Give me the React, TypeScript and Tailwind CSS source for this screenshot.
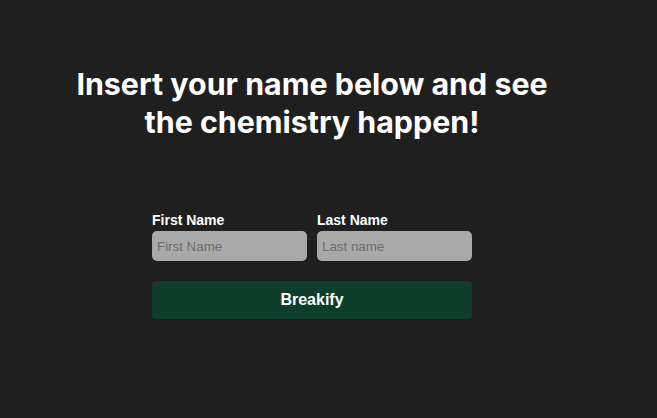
import React from "react";

export default function App() {
  return (
    <div className="min-h-[418px] w-full bg-[#1f1f1f]">
      <div className="flex w-[624px] flex-col items-center pt-[65px]">
        <h1 className="max-w-[500px] text-center font-['Inter',sans-serif] text-[30.4px] font-bold leading-[38px] text-white">
          Insert your name below and see the chemistry happen!
        </h1>
        <form
          className="mt-[71px] flex w-[320px] flex-col font-['Liberation_Sans',Arial,sans-serif]"
          onSubmit={(e) => e.preventDefault()}
        >
          <div className="flex gap-[10px]">
            <label className="flex w-[155px] flex-col">
              <span className="text-[14px] font-bold leading-[16px] text-white">First Name</span>
              <input
                placeholder="First Name"
                className="mt-[3px] h-[30px] w-[155px] rounded-[5px] bg-[#a9a9a9] px-[5px] text-[13.333px] text-[#333] outline-none placeholder:text-[#6e6e6e]"
              />
            </label>
            <label className="flex w-[155px] flex-col">
              <span className="text-[14px] font-bold leading-[16px] text-white">Last Name</span>
              <input
                placeholder="Last name"
                className="mt-[3px] h-[30px] w-[155px] rounded-[5px] bg-[#a9a9a9] px-[5px] text-[13.333px] text-[#333] outline-none placeholder:text-[#6e6e6e]"
              />
            </label>
          </div>
          <button
            type="submit"
            className="mt-[20px] h-[38px] w-[320px] rounded-[4px] bg-[#0e3d2b] text-[16px] font-bold text-white"
          >
            Breakify
          </button>
        </form>
      </div>
    </div>
  );
}
